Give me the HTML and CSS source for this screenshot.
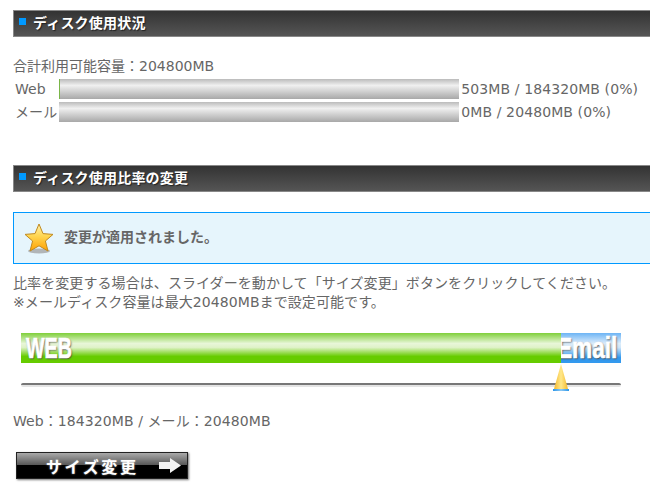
FILE: index.html
```html
<!DOCTYPE html>
<html>
<head>
    <meta charset="utf-8" />
    <title>ディスク使用状況</title>
    <link rel="stylesheet" href="styles.css">
</head>
<body>
    <div class="container">
        <h2 class="section-title"><span class="title-mark"></span>ディスク使用状況</h2>
        <p class="total">合計利用可能容量：204800MB</p>
        <table class="usage">
            <tr>
                <td>Web</td>
                <td><div class="usage-bar"><div class="usage-fill" style="width: 1px"></div></div></td>
                <td>503MB / 184320MB (0%)</td>
            </tr>
            <tr>
                <td>メール</td>
                <td><div class="usage-bar"></div></td>
                <td>0MB / 20480MB (0%)</td>
            </tr>
        </table>

        <h2 class="section-title second"><span class="title-mark"></span>ディスク使用比率の変更</h2>
        <div class="notice">
            <svg class="notice-star" width="30" height="31" viewBox="0 0 30 31">
                <defs>
                    <linearGradient id="starFill" x1="0" y1="0" x2="0" y2="1">
                        <stop offset="0" stop-color="#fff2b0" />
                        <stop offset="0.45" stop-color="#ffd650" />
                        <stop offset="1" stop-color="#ffa000" />
                    </linearGradient>
                </defs>
                <ellipse cx="15" cy="28" rx="11" ry="2.5" fill="#9a9a9a" opacity="0.7" />
                <path d="M15 1 L19 10.6 L29 11.4 L21.4 18 L24 28 L15 22.8 L6 28 L8.6 18 L1 11.4 L11 10.6 Z" fill="url(#starFill)" stroke="#c08a20" stroke-width="1" stroke-linejoin="round" />
            </svg>
            <span class="notice-text">変更が適用されました。</span>
        </div>
        <p class="help">比率を変更する場合は、スライダーを動かして「サイズ変更」ボタンをクリックしてください。<br>※メールディスク容量は最大20480MBまで設定可能です。</p>

        <div class="slider">
            <div class="slider-bar">
                <div class="slider-web"><span class="slider-label web-label">WEB</span></div>
                <div class="slider-mail"><span class="slider-label mail-label">Email</span></div>
            </div>
            <div class="slider-track"></div>
            <svg class="slider-handle" width="16" height="28" viewBox="0 0 16 28">
                <defs>
                    <linearGradient id="handleFill" x1="0" y1="0" x2="1" y2="0">
                        <stop offset="0" stop-color="#f5b92c" />
                        <stop offset="0.5" stop-color="#ffe88a" />
                        <stop offset="1" stop-color="#f5b92c" />
                    </linearGradient>
                    <linearGradient id="handleBase" x1="0" y1="0" x2="1" y2="0">
                        <stop offset="0" stop-color="#2a96e8" />
                        <stop offset="0.5" stop-color="#8cc8f5" />
                        <stop offset="1" stop-color="#2a96e8" />
                    </linearGradient>
                </defs>
                <path d="M8 0 L15 25 L1 25 Z" fill="url(#handleFill)" />
                <rect x="0" y="25" width="16" height="2" fill="url(#handleBase)" />
            </svg>
        </div>

        <p class="result">Web：184320MB / メール：20480MB</p>

        <button class="resize-button">
            <span>サイズ変更</span>
            <svg width="22" height="15" viewBox="0 0 22 15"><path d="M0 4 H11 V0 L22 7.5 L11 15 V11 H0 Z" fill="#f2f2f2" /></svg>
        </button>
    </div>
</body>
</html>
```

FILE: styles.css
```css
html, body {
    margin: 0;
    padding: 0;
    overflow: hidden;
    height: 504px;
    background-color: white;
}

body {
    font-family: "DejaVu Sans", "Noto Sans CJK JP", sans-serif;
    font-size: 14px;
    color: #666;
}

.container {
    padding: 10px 0 0 13px;
}

.section-title {
    display: flex;
    align-items: center;
    box-sizing: border-box;
    height: 27px;
    margin: 0;
    padding: 0 0 4px 5px;
    border: 1px solid #888;
    border-right: none;
    background: linear-gradient(#333, #555);
    color: white;
    font-size: 14px;
    font-weight: bold;
    letter-spacing: 0.2px;
    text-shadow: 1px 1px 1px #222;
}

.section-title.second {
    margin-top: 40px;
}

.title-mark {
    width: 7px;
    height: 7px;
    margin-right: 7px;
    background-color: #0099ff;
}

.total {
    margin: 19px 0 0;
    line-height: 20px;
}

.usage {
    border-collapse: separate;
    border-spacing: 2px 3px;
    line-height: 20px;
    letter-spacing: 0.1px;
}

.usage td {
    padding: 0;
    white-space: nowrap;
}

.usage-bar {
    width: 400px;
    height: 20px;
    background: linear-gradient(#bbb, #f0f0f0 32%, #ddd 50%, #a8a8a8);
}

.usage-fill {
    height: 100%;
    background-color: #7ab648;
}

.notice {
    display: flex;
    align-items: center;
    gap: 10px;
    box-sizing: border-box;
    height: 52px;
    margin-top: 20px;
    padding-left: 10px;
    border: 1px solid #0099ff;
    border-right: none;
    background-color: #e6f5fc;
    font-weight: bold;
}

.notice-text {
    padding-bottom: 4px;
}

.help {
    margin: 10px 0 0;
    line-height: 19px;
    letter-spacing: 0.08px;
}

.slider {
    position: relative;
    width: 600px;
    margin: 21px 0 0 8px;
}

.slider-bar {
    display: flex;
    height: 30px;
}

.slider-web, .slider-mail {
    display: flex;
    align-items: center;
    overflow: hidden;
}

.slider-web {
    flex: 0 0 540px;
    background: linear-gradient(#7fcf3a, #e8f6d8 35%, #dff2c8 48%, #66cc00 78%);
}

.slider-mail {
    flex: 1;
    justify-content: flex-end;
    background: linear-gradient(#6db4f5, #dcedfb 35%, #cfe6f9 48%, #3399ee 82%);
}

.slider-label {
    display: inline-block;
    color: white;
    font-family: "Liberation Sans", sans-serif;
    font-size: 29px;
    font-weight: bold;
    -webkit-text-stroke: 0.7px white;
    text-shadow: 1px 1px 2px #444;
}

.web-label {
    margin-left: 5px;
    transform-origin: left center;
    transform: scaleX(0.68);
}

.mail-label {
    flex-shrink: 0;
    margin-right: 4px;
    transform-origin: right center;
    transform: scaleX(0.78);
}

.slider-track {
    box-sizing: border-box;
    height: 4px;
    margin-top: 20px;
    border-top: 2px solid #777;
    background-color: #e4e4e4;
    border-radius: 2px;
}

.slider-handle {
    position: absolute;
    left: 532px;
    top: 31px;
}

.result {
    margin: 24px 0 0;
    line-height: 20px;
    letter-spacing: 0.08px;
}

.resize-button {
    display: flex;
    align-items: center;
    box-sizing: border-box;
    width: 172px;
    height: 27px;
    margin: 21px 0 0 3px;
    padding: 0 0 0 29px;
    border: 1px solid #222;
    background: linear-gradient(#aaa, #555 49%, #000 50%);
    box-shadow: 1px 1px 2px #777;
    color: white;
    font-family: "DejaVu Sans", "Noto Sans CJK JP", sans-serif;
    font-size: 16px;
    font-weight: bold;
    letter-spacing: 2.6px;
    text-shadow: 0 0 2px #999;
}

.resize-button svg {
    margin-left: 20px;
}
```
